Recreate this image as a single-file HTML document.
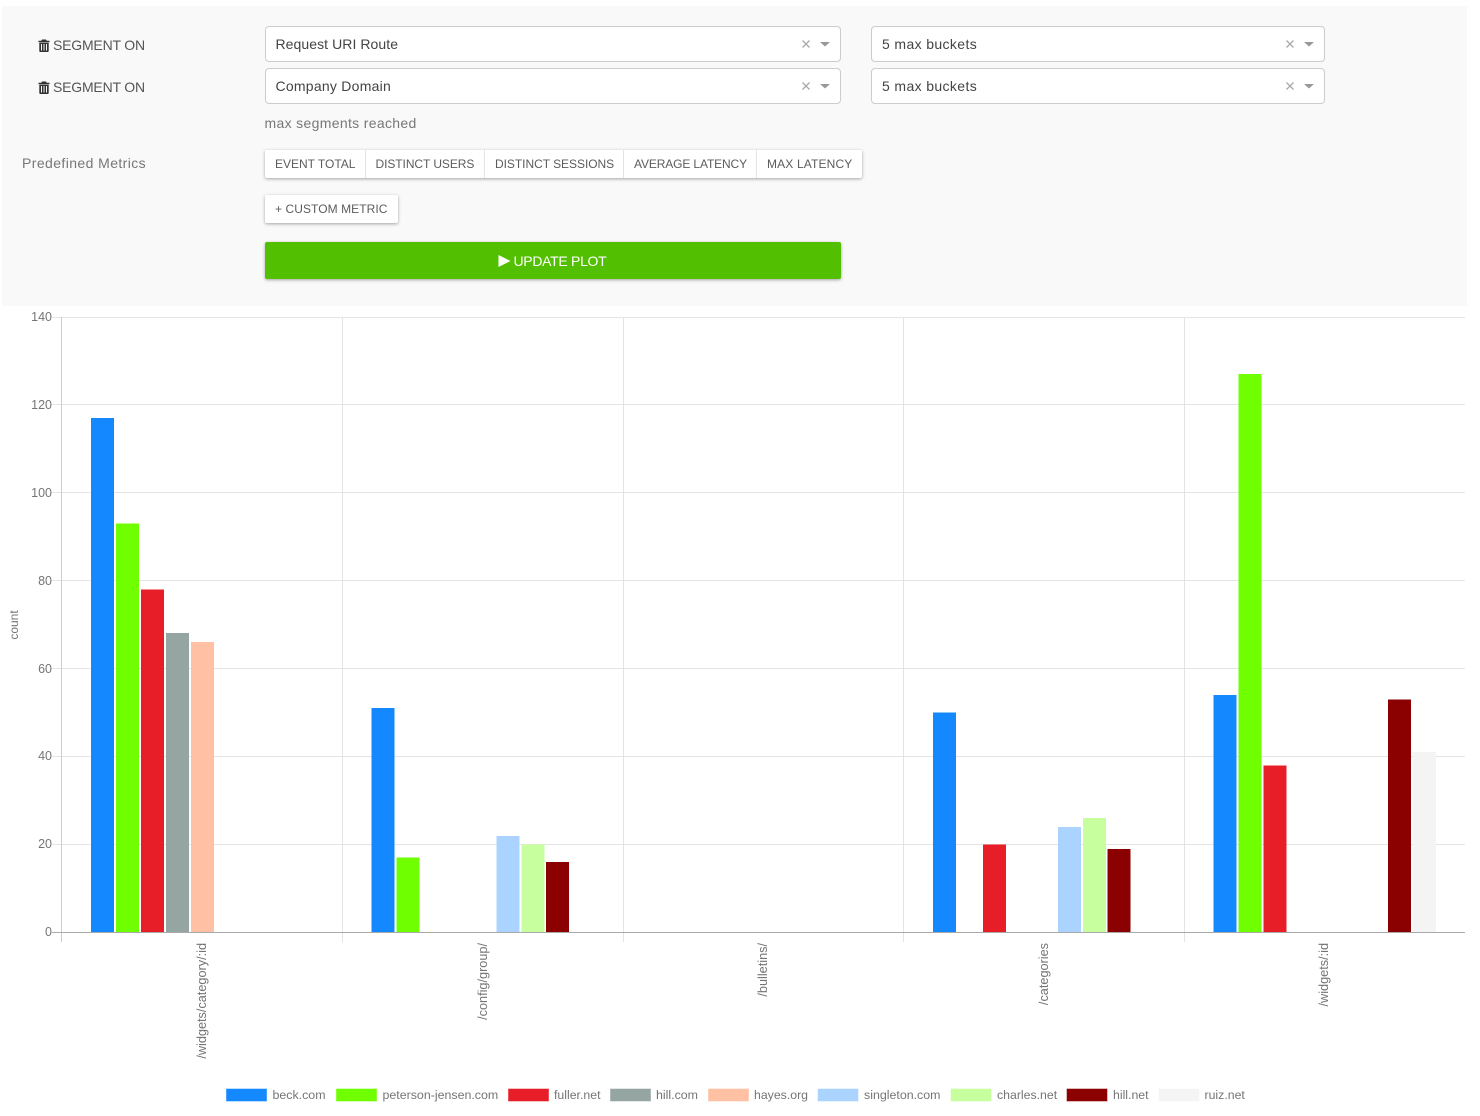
<!DOCTYPE html>
<html>
<head>
<meta charset="utf-8">
<style>
html,body{margin:0;padding:0;background:#fff;}
body{width:1480px;height:1116px;position:relative;overflow:hidden;font-family:"Liberation Sans",sans-serif;}
.panel{position:absolute;left:2px;top:6px;width:1465px;height:300px;background:#f9f9f9;}
.t{position:absolute;white-space:nowrap;font-size:14px;line-height:16px;}
.sel{position:absolute;box-sizing:border-box;height:36px;background:#fff;border:1px solid #ccc;border-radius:4px;}
.sel .v{position:absolute;left:9.500px;top:9px;font-size:14px;line-height:16px;color:#444;white-space:nowrap;}
.sel svg{position:absolute;top:0;right:0;}
.grp{position:absolute;left:265px;top:150px;width:597px;height:28px;background:#fff;border-radius:2px;box-shadow:0 1px 3px rgba(0,0,0,.35);}
.grp i{position:absolute;top:0;width:1px;height:28px;background:#e3e3e3;}
.b{position:absolute;white-space:nowrap;font-size:12px;line-height:14px;color:#5c5c5c;}
.cus{position:absolute;left:265px;top:195px;width:133px;height:28px;background:#fff;border-radius:2px;box-shadow:0 1px 3px rgba(0,0,0,.35);}
.upd{position:absolute;left:265px;top:242px;width:576px;height:37px;background:#52c000;border-radius:2px;box-shadow:0 1px 3px rgba(0,0,0,.35);}
svg.chart{position:absolute;left:0;top:0;}
svg.chart text{font-family:"Liberation Sans",sans-serif;font-size:12.5px;fill:#757575;}
</style>
</head>
<body>
<div class="panel"></div>

<svg style="position:absolute;left:38px;top:39px" width="12" height="13" viewBox="0 0 12 13"><path fill="#333" d="M4 0.5h4l.7 1.3H11.500v1.400H.5V1.800H3.300zM1.300 3.800h9.400V12a1 1 0 0 1-1 1H2.300a1 1 0 0 1-1-1zM3 5v6.500h1V5zM5.500 5v6.500h1V5zM8 5v6.500h1V5z"/></svg>
<div class="t" style="left:53px;top:37px;color:#555;letter-spacing:-.2px">SEGMENT ON</div>
<svg style="position:absolute;left:38px;top:81px" width="12" height="13" viewBox="0 0 12 13"><path fill="#333" d="M4 0.5h4l.7 1.3H11.500v1.400H.5V1.800H3.300zM1.300 3.800h9.400V12a1 1 0 0 1-1 1H2.300a1 1 0 0 1-1-1zM3 5v6.500h1V5zM5.500 5v6.500h1V5zM8 5v6.500h1V5z"/></svg>
<div class="t" style="left:53px;top:79px;color:#555;letter-spacing:-.2px">SEGMENT ON</div>

<div class="sel" style="left:265px;top:26px;width:576px"><div class="v" style="letter-spacing:.07px">Request URI Route</div>
<svg width="50" height="34" viewBox="0 0 50 34"><path d="M12.500 13.500l7 7M19.500 13.500l-7 7" stroke="#aaa" stroke-width="1.300" fill="none"/><path d="M30 15h10l-5 4.500z" fill="#999"/></svg></div>
<div class="sel" style="left:871px;top:26px;width:454px"><div class="v" style="letter-spacing:.37px;left:10px">5 max buckets</div>
<svg width="50" height="34" viewBox="0 0 50 34"><path d="M12.500 13.500l7 7M19.500 13.500l-7 7" stroke="#aaa" stroke-width="1.300" fill="none"/><path d="M30 15h10l-5 4.500z" fill="#999"/></svg></div>
<div class="sel" style="left:265px;top:68px;width:576px"><div class="v" style="letter-spacing:.25px">Company Domain</div>
<svg width="50" height="34" viewBox="0 0 50 34"><path d="M12.500 13.500l7 7M19.500 13.500l-7 7" stroke="#aaa" stroke-width="1.300" fill="none"/><path d="M30 15h10l-5 4.500z" fill="#999"/></svg></div>
<div class="sel" style="left:871px;top:68px;width:454px"><div class="v" style="letter-spacing:.37px;left:10px">5 max buckets</div>
<svg width="50" height="34" viewBox="0 0 50 34"><path d="M12.500 13.500l7 7M19.500 13.500l-7 7" stroke="#aaa" stroke-width="1.300" fill="none"/><path d="M30 15h10l-5 4.500z" fill="#999"/></svg></div>

<div class="t" style="left:264.500px;top:115px;color:#777;letter-spacing:.33px">max segments reached</div>
<div class="t" style="left:22px;top:155px;color:#777;letter-spacing:.41px">Predefined Metrics</div>

<div class="grp">
<i style="left:100px"></i><i style="left:219px"></i><i style="left:358px"></i><i style="left:491px"></i>
<div class="b" style="left:10px;top:7px;letter-spacing:0">EVENT TOTAL</div>
<div class="b" style="left:110.500px;top:7px;letter-spacing:-.07px">DISTINCT USERS</div>
<div class="b" style="left:230px;top:7px;letter-spacing:-.04px">DISTINCT SESSIONS</div>
<div class="b" style="left:369px;top:7px;letter-spacing:-.13px">AVERAGE LATENCY</div>
<div class="b" style="left:502px;top:7px;letter-spacing:.15px">MAX LATENCY</div>
</div>
<div class="cus"><div class="b" style="left:10px;top:7px;letter-spacing:.07px">+ CUSTOM METRIC</div></div>
<div class="upd">
<svg style="position:absolute;left:233px;top:13px" width="13" height="13" viewBox="0 0 13 13"><path d="M0.500 0L12.500 6L0.500 12z" fill="#fff"/></svg>
<div class="t" style="left:248.500px;top:11px;color:#fff;letter-spacing:-.3px">UPDATE PLOT</div>
</div>

<svg class="chart" width="1480" height="1116" viewBox="0 0 1480 1116">
<g stroke="#e4e4e4" stroke-width="1" fill="none">
<path d="M52 317.500H1465M52 404.500H1465M52 492.500H1465M52 580.500H1465M52 668.500H1465M52 756.500H1465M52 844.500H1465"/>
<path d="M342.500 317V942M623.500 317V942M903.500 317V942M1184.500 317V942"/>
</g>
<path d="M61.500 317V942" stroke="#ccc" fill="none"/>

<g>
<rect x="91" y="418" width="23" height="514.500" fill="#1488ff"/>
<rect x="116" y="523.500" width="23" height="409" fill="#6fff00"/>
<rect x="141" y="589.500" width="23" height="343" fill="#e71e27"/>
<rect x="166" y="633" width="23" height="299.500" fill="#95a5a2"/>
<rect x="191" y="642" width="23" height="290.500" fill="#ffc0a3"/>

<rect x="371.500" y="708" width="23" height="224.500" fill="#1488ff"/>
<rect x="396.500" y="857.500" width="23" height="75" fill="#6fff00"/>
<rect x="496.500" y="836" width="23" height="96.500" fill="#aad4ff"/>
<rect x="521.500" y="844.500" width="23" height="88" fill="#c8ff9e"/>
<rect x="546" y="862" width="23" height="70.500" fill="#8b0000"/>

<rect x="933" y="712.500" width="23" height="220" fill="#1488ff"/>
<rect x="983" y="844.500" width="23" height="88" fill="#e71e27"/>
<rect x="1058" y="827" width="23" height="105.500" fill="#aad4ff"/>
<rect x="1083" y="818" width="23" height="114.500" fill="#c8ff9e"/>
<rect x="1107.500" y="849" width="23" height="83.500" fill="#8b0000"/>

<rect x="1213.500" y="695" width="23" height="237.500" fill="#1488ff"/>
<rect x="1238.500" y="374" width="23" height="558.500" fill="#6fff00"/>
<rect x="1263.500" y="765.500" width="23" height="167" fill="#e71e27"/>
<rect x="1388" y="699.500" width="23" height="233" fill="#8b0000"/>
<rect x="1412.500" y="752" width="23.500" height="180.500" fill="#f4f4f4"/>
</g>
<path d="M52 932.500H1465" stroke="#aaa" fill="none"/>

<g text-anchor="end">
<text x="52" y="321">140</text>
<text x="52" y="409">120</text>
<text x="52" y="497">100</text>
<text x="52" y="585">80</text>
<text x="52" y="673">60</text>
<text x="52" y="760">40</text>
<text x="52" y="848">20</text>
<text x="52" y="936">0</text>
<text transform="translate(206,943) rotate(-90)" style="font-size:12.700px">/widgets/category/:id</text>
<text transform="translate(487,943) rotate(-90)" style="font-size:12.700px">/config/group/</text>
<text transform="translate(767,943) rotate(-90)" style="font-size:12.700px">/bulletins/</text>
<text transform="translate(1048,943) rotate(-90)" style="font-size:12.700px">/categories</text>
<text transform="translate(1328,943) rotate(-90)" style="font-size:12.700px">/widgets/:id</text>
</g>
<text transform="translate(18,625) rotate(-90)" text-anchor="middle" style="font-size:12px">count</text>

<g stroke-opacity=".45" stroke="#fff">
<rect x="226" y="1088.500" width="41" height="13" fill="#1488ff"/>
<rect x="336" y="1088.500" width="41" height="13" fill="#6fff00"/>
<rect x="508" y="1088.500" width="41" height="13" fill="#e71e27"/>
<rect x="610" y="1088.500" width="41" height="13" fill="#95a5a2"/>
<rect x="708" y="1088.500" width="41" height="13" fill="#ffc0a3"/>
<rect x="817.500" y="1088.500" width="41" height="13" fill="#aad4ff"/>
<rect x="950.500" y="1088.500" width="41" height="13" fill="#c8ff9e"/>
<rect x="1066.500" y="1088.500" width="41" height="13" fill="#8b0000"/>
<rect x="1158.500" y="1088.500" width="41" height="13" fill="#f4f4f4"/>
</g>
<g>
<text x="272.500" y="1099" style="font-size:12.400px">beck.com</text>
<text x="382.500" y="1099" style="font-size:12.400px">peterson-jensen.com</text>
<text x="554" y="1099" style="font-size:12.300px">fuller.net</text>
<text x="656" y="1099" style="font-size:12.400px">hill.com</text>
<text x="754" y="1099" style="font-size:12.300px">hayes.org</text>
<text x="864" y="1099" style="font-size:12.400px">singleton.com</text>
<text x="997" y="1099" style="font-size:12.300px">charles.net</text>
<text x="1113" y="1099" style="font-size:12.300px">hill.net</text>
<text x="1204.500" y="1099" style="font-size:12.300px">ruiz.net</text>
</g>
</svg>
</body>
</html>
